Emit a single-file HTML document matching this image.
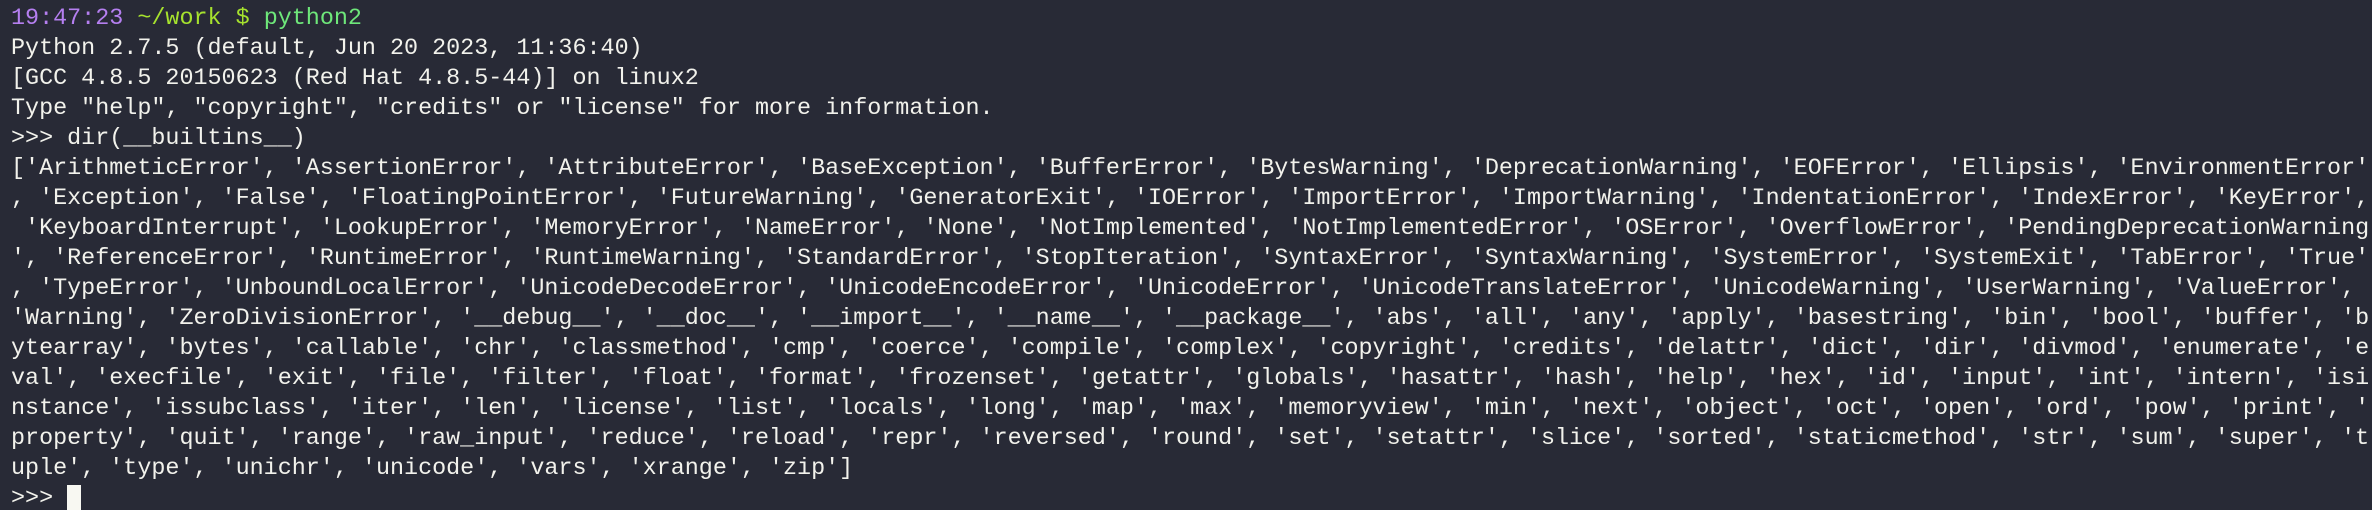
<!DOCTYPE html><html><head><style>
html,body{margin:0;padding:0;background:#282a36;width:2372px;height:510px;overflow:hidden}
pre{margin:0;padding:4px 0 0 11px;font-family:"Liberation Mono",monospace;font-size:23.4px;line-height:30px;color:#f2f2ec;white-space:pre}
.p{color:#b57ff0}.y{color:#a6e22e}.g{color:#6ee77a}
.c{display:inline-block;width:14px;height:26px;background:#f8f8f2;vertical-align:-7px}
</style></head><body><pre><span class="p">19:47:23</span> <span class="y">~/work $</span> <span class="g">python2</span>
Python 2.7.5 (default, Jun 20 2023, 11:36:40)
[GCC 4.8.5 20150623 (Red Hat 4.8.5-44)] on linux2
Type "help", "copyright", "credits" or "license" for more information.
&gt;&gt;&gt; dir(__builtins__)
['ArithmeticError', 'AssertionError', 'AttributeError', 'BaseException', 'BufferError', 'BytesWarning', 'DeprecationWarning', 'EOFError', 'Ellipsis', 'EnvironmentError'
, 'Exception', 'False', 'FloatingPointError', 'FutureWarning', 'GeneratorExit', 'IOError', 'ImportError', 'ImportWarning', 'IndentationError', 'IndexError', 'KeyError',
 'KeyboardInterrupt', 'LookupError', 'MemoryError', 'NameError', 'None', 'NotImplemented', 'NotImplementedError', 'OSError', 'OverflowError', 'PendingDeprecationWarning
', 'ReferenceError', 'RuntimeError', 'RuntimeWarning', 'StandardError', 'StopIteration', 'SyntaxError', 'SyntaxWarning', 'SystemError', 'SystemExit', 'TabError', 'True'
, 'TypeError', 'UnboundLocalError', 'UnicodeDecodeError', 'UnicodeEncodeError', 'UnicodeError', 'UnicodeTranslateError', 'UnicodeWarning', 'UserWarning', 'ValueError',
'Warning', 'ZeroDivisionError', '__debug__', '__doc__', '__import__', '__name__', '__package__', 'abs', 'all', 'any', 'apply', 'basestring', 'bin', 'bool', 'buffer', 'b
ytearray', 'bytes', 'callable', 'chr', 'classmethod', 'cmp', 'coerce', 'compile', 'complex', 'copyright', 'credits', 'delattr', 'dict', 'dir', 'divmod', 'enumerate', 'e
val', 'execfile', 'exit', 'file', 'filter', 'float', 'format', 'frozenset', 'getattr', 'globals', 'hasattr', 'hash', 'help', 'hex', 'id', 'input', 'int', 'intern', 'isi
nstance', 'issubclass', 'iter', 'len', 'license', 'list', 'locals', 'long', 'map', 'max', 'memoryview', 'min', 'next', 'object', 'oct', 'open', 'ord', 'pow', 'print', '
property', 'quit', 'range', 'raw_input', 'reduce', 'reload', 'repr', 'reversed', 'round', 'set', 'setattr', 'slice', 'sorted', 'staticmethod', 'str', 'sum', 'super', 't
uple', 'type', 'unichr', 'unicode', 'vars', 'xrange', 'zip']
&gt;&gt;&gt; <span class="c"></span></pre></body></html>
